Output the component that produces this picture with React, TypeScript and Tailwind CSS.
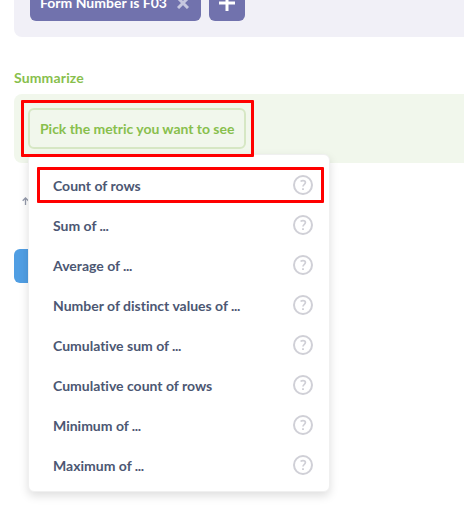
const metrics = [
  'Count of rows',
  'Sum of ...',
  'Average of ...',
  'Number of distinct values of ...',
  'Cumulative sum of ...',
  'Cumulative count of rows',
  'Minimum of ...',
  'Maximum of ...',
];

function MetricLabel({ label }: { label: string }) {
  const name = label.replace(' ...', '');
  return (
    <span className="text-sm leading-5">
      {name}
      {name !== label && <span className="tracking-[-0.35px]"> ...</span>}
    </span>
  );
}

function HelpIcon() {
  return (
    <svg className="h-5 w-5" viewBox="0 0 20 20" fill="none" stroke="#d0d0d7">
      <circle cx="10" cy="10" r="9" strokeWidth="2" />
      <path d="M7.6 6.5C8.2 5.9 9 5.6 10 5.6C11.5 5.6 12.4 6.4 12.4 7.6C12.4 9.4 10 9.3 10 11.6" strokeWidth="1.7" />
      <path d="M10 13.2V15" strokeWidth="1.9" />
    </svg>
  );
}

function MetricMenu() {
  return (
    <div className="absolute top-[154px] left-[28px] w-[302px] rounded-md border border-[#f0f0f0] bg-white pt-[10px] pb-[6px] shadow-[0_4px_10px_rgba(0,0,0,0.13)]">
      <ul>
        {metrics.map((label) => (
          <li key={label} className="flex h-10 items-center justify-between pr-4 pl-6">
            <span className="pt-px leading-5"><MetricLabel label={label} /></span>
            <HelpIcon />
          </li>
        ))}
      </ul>
    </div>
  );
}

export default function App() {
  return (
    <div className="relative h-[514px] w-[464px] overflow-hidden bg-white pl-[14px] font-['Lato',sans-serif] font-bold text-[#4c5773] [font-variant-ligatures:none]">
      <section className="flex h-[37px] items-start gap-2 rounded-bl-lg bg-[#f1f0f7] pl-4">
        <div className="-mt-[15px] flex h-9 w-[171px] items-center rounded-md bg-[#7172ad] pl-[10px] text-sm text-white">
          <span>Form Number is F03</span>
          <svg className="ml-[10px] h-3 w-3" viewBox="0 0 12 12" stroke="#c6c7df" strokeWidth="3">
            <path d="M1 1L11 11M11 1L1 11" />
          </svg>
        </div>
        <div className="-mt-[15px] flex h-9 w-9 items-center justify-center rounded-md bg-[#7172ad]">
          <svg className="h-4 w-4" viewBox="0 0 16 16" stroke="#fff" strokeWidth="3">
            <path d="M8 0V16M0 8H16" />
          </svg>
        </div>
      </section>

      <h2 className="mt-[31px] h-[26px] text-sm leading-5 tracking-[0.15px] text-[#88bf4d]">Summarize</h2>

      <section className="flex h-[69px] items-start rounded-l-lg bg-[#f1f7ec] pt-[14px] pl-[14px]">
        <button className="h-[41px] w-[218px] rounded-md border-2 border-[#d6e7c4] pl-[10px] text-left text-sm tracking-[-0.03px] text-[#88bf4d]">
          Pick the metric you want to see
        </button>
      </section>

      <div className="mt-[34px] flex h-2 pl-2">
        <svg className="h-2 w-[7px]" viewBox="0 0 7 8" fill="none" stroke="#949aab" strokeWidth="1.3">
          <path d="M3.5 8V1M0.7 3.8L3.5 1L6.3 3.8" />
        </svg>
      </div>
      <div className="mt-11 h-[34px] w-24 rounded-md bg-[#509ee3]" />

      <MetricMenu />
      <div className="absolute top-[100px] left-[21px] h-[57px] w-[233px] rounded-[1px] border-3 border-[#ff0000]" />
      <div className="absolute top-[167px] left-[37px] h-[36px] w-[287px] rounded-[1px] border-3 border-[#ff0000]" />
    </div>
  );
}
